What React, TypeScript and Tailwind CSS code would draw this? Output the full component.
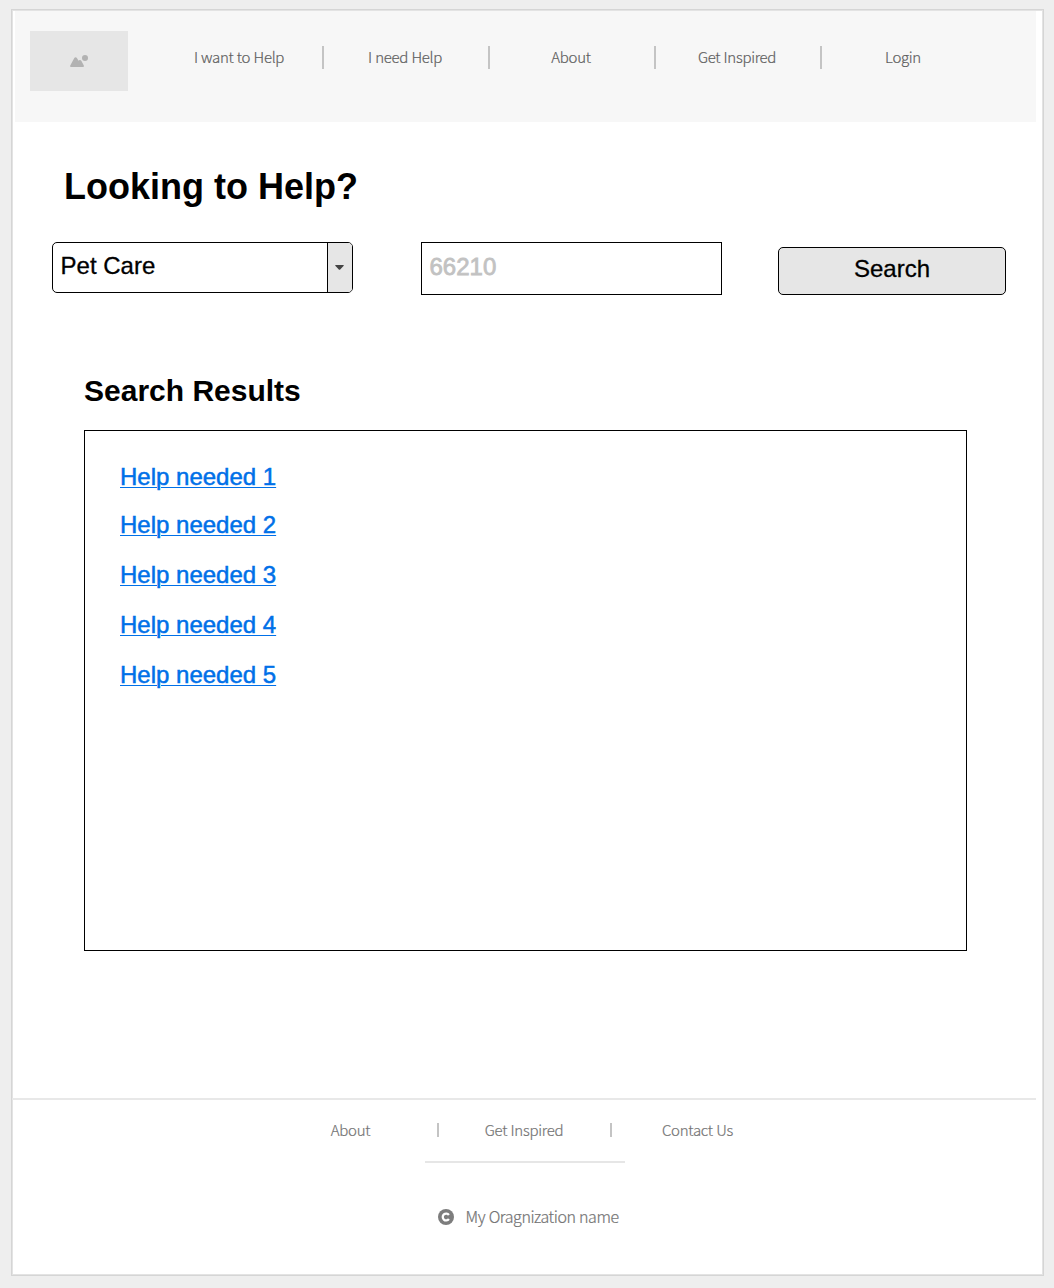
const navItems = ['I want to Help', 'I need Help', 'About', 'Get Inspired', 'Login'];
const results = ['Help needed 1', 'Help needed 2', 'Help needed 3', 'Help needed 4', 'Help needed 5'];

function Logo() {
  return (
    <div className="mt-[20px] ml-[15px] flex h-[60px] w-[98px] items-center justify-center bg-[#e6e6e6]">
      <svg width="18" height="12" viewBox="0 0 18 12" fill="#b2b2b2">
        <path d="M1.2 12 C0.1 12 -0.2 11 0.4 10.2 L4.3 2.9 C4.9 1.9 6.2 1.9 6.9 2.9 L8.5 5.8 L9.2 5.2 C9.9 4.7 10.8 4.9 11.3 5.7 L13.7 10.2 C14.2 11.1 13.8 12 12.8 12 Z" />
        <circle cx="15" cy="3" r="3" />
      </svg>
    </div>
  );
}

function Header() {
  return (
    <header className="ml-[2px] flex h-[111px] w-[1021px] bg-[#f7f7f7]">
      <Logo />
      <nav className="mt-[35px] ml-[28px] flex h-[23px] font-['Noto_Sans_CJK_SC',sans-serif] text-[15px] leading-[21px] font-light tracking-[-0.32px] text-[#5e5e5e] [-webkit-text-stroke:0.2px] [word-spacing:0.4px]">
        {navItems.map((item, i) => (
          <a
            key={item}
            className={
              i === 0
                ? 'w-[166px] text-center whitespace-nowrap'
                : 'w-[166px] border-l-2 border-[#c4c4c4] pr-[2px] text-center whitespace-nowrap'
            }
          >
            {item}
          </a>
        ))}
      </nav>
    </header>
  );
}

function SearchForm() {
  return (
    <form className="mt-[35px] ml-[39px] flex items-start text-[24px] leading-[28px] text-black">
      <div className="flex h-[51px] w-[301px] overflow-hidden rounded-[5px] border border-black bg-white">
        <span className="flex-1 pt-[9px] pl-[7.6px] [-webkit-text-stroke:0.3px]">Pet Care</span>
        <span className="flex w-[25px] items-center justify-center border-l border-black bg-[#e6e6e6] pr-[1px]">
          <svg width="9" height="5" viewBox="0 0 9 5" fill="#444">
            <path d="M0.8 0 H8.2 C8.8 0 8.9 0.6 8.5 1 L5.2 4.4 C4.8 4.8 4.2 4.8 3.8 4.4 L0.5 1 C0.1 0.6 0.2 0 0.8 0 Z" />
          </svg>
        </span>
      </div>
      <div className="ml-[68px] h-[53px] w-[301px] border border-black bg-white pt-[10px] pl-[7.5px] text-[#c2c2c2] [-webkit-text-stroke:0.8px]">
        66210
      </div>
      <button
        type="button"
        className="mt-[5px] ml-[56px] flex h-[48px] w-[228px] justify-center rounded-[5px] border border-black bg-[#e6e6e6] pt-[7px] [-webkit-text-stroke:0.3px]"
      >
        Search
      </button>
    </form>
  );
}

function Results() {
  return (
    <section className="ml-[71px]">
      <h2 className="mt-[78px] text-[30px] leading-[36px] font-bold text-black">Search Results</h2>
      <ul className="mt-[21px] h-[521px] w-[883px] border border-black pt-[31px] pl-[35px]">
        {results.map((r, i) => (
          <li key={r} className={i === 0 ? 'h-[48px]' : 'h-[50px]'}>
            <a className="text-[24px] leading-[30px] text-[#0070e8] underline decoration-1 underline-offset-[2px] [-webkit-text-stroke:0.5px]">
              {r}
            </a>
          </li>
        ))}
      </ul>
    </section>
  );
}

function Footer() {
  return (
    <footer className="mt-[147px] -ml-px h-[175px] w-[1024px] border-t-2 border-[#e8e8e8] font-['Noto_Sans_CJK_SC',sans-serif] font-light text-[#737373] [-webkit-text-stroke:0.2px] [word-spacing:0.4px]">
      <div className="mt-[23px] ml-[252px] flex h-[14px] text-[15px] leading-[14px] tracking-[-0.3px] whitespace-nowrap">
        <a className="w-[173px] text-center">About</a>
        <a className="w-[173px] border-l-2 border-[#c4c4c4] pr-[1px] text-center">Get Inspired</a>
        <a className="w-[173px] border-l-2 border-[#c4c4c4] text-center">Contact Us</a>
      </div>
      <div className="mt-[24px] ml-[413px] h-[2px] w-[200px] bg-[#e6e6e6]" />
      <div className="mt-[42px] ml-[425.6px] flex h-[24px] items-center text-[16px] leading-[24px] tracking-[-0.43px] whitespace-nowrap">
        <svg width="16" height="16" viewBox="0 0 16 16" fill="none">
          <circle cx="8" cy="8" r="8" fill="#7d7d7d" />
          <path d="M10.9 6 A3.4 3.4 0 1 0 10.9 10" stroke="#fff" strokeWidth="2.3" />
        </svg>
        <span className="-mt-[2px] ml-[12px]">My Oragnization name</span>
      </div>
    </footer>
  );
}

export default function App() {
  return (
    <div className="h-[1288px] w-[1054px] bg-[#eee] pt-[9px] pl-[11px] font-['Liberation_Sans',sans-serif]">
      <div className="h-[1267px] w-[1033px] border border-[#d5d5d5]">
        <div className="h-full w-full border border-[#e3e3e3] bg-white">
          <Header />
          <h1 className="mt-[45px] ml-[51px] text-[36px] leading-[40px] font-bold text-black">Looking to Help?</h1>
          <SearchForm />
          <Results />
          <Footer />
        </div>
      </div>
    </div>
  );
}
